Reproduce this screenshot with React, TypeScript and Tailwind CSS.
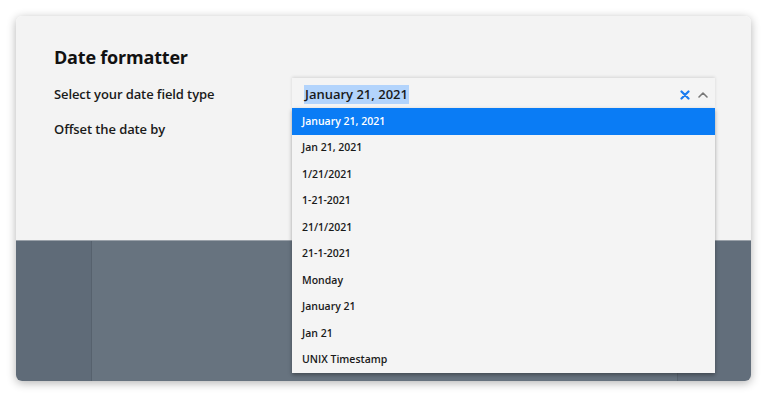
import React from "react";

const options = [
  "January 21, 2021",
  "Jan 21, 2021",
  "1/21/2021",
  "1-21-2021",
  "21/1/2021",
  "21-1-2021",
  "Monday",
  "January 21",
  "Jan 21",
  "UNIX Timestamp",
];

export default function App() {
  return (
    <div
      className="w-[767px] h-[397px] bg-white p-4"
      style={{ fontFamily: '"Open Sans", "Noto Sans", sans-serif' }}
    >
      <div className="relative flex flex-col w-[735px] h-[365px] rounded-[6px] overflow-hidden shadow-[0_2px_10px_rgba(0,0,0,0.3)]">
        {/* Top panel */}
        <div className="h-[225px] bg-[#f3f3f3] pl-[38px] pr-[36px] pt-[28px] border-b border-[#9aa1a9]">
          <h1 className="text-[18px] leading-[26px] font-bold tracking-[-0.2px] text-[#111]">
            Date formatter
          </h1>
          <div className="mt-[8px] grid grid-cols-[238px_1fr] gap-y-[11px]">
            <div className="h-[30px] pt-[3px] flex items-center text-[13px] font-semibold tracking-[-0.1px] text-[#1a1a1a]">
              Select your date field type
            </div>
            <div className="relative">
              <div className="h-[30px] pt-[3px] flex items-center pl-3 pr-[6px] bg-[#f4f4f4] shadow-[0_-1px_3px_rgba(0,0,0,0.12)]">
                <span className="bg-[#b3d4fc] text-[13px] leading-[19px] font-semibold text-[#1a1a1a] px-px">
                  January 21, 2021
                </span>
                <div className="ml-auto flex items-center gap-[7px]">
                  <svg width="10" height="10" viewBox="0 0 10 10">
                    <path d="M1.5 1.5L8.5 8.5M8.5 1.5L1.5 8.5" stroke="#1a7cf0" strokeWidth="2.2" strokeLinecap="round" />
                  </svg>
                  <svg width="12" height="10" viewBox="0 0 12 10">
                    <path d="M2 7L6 3L10 7" stroke="#777" strokeWidth="1.6" fill="none" strokeLinecap="round" strokeLinejoin="round" />
                  </svg>
                </div>
              </div>
              {/* Open menu */}
              <div className="absolute left-0 right-0 top-[30px] z-10 bg-[#f4f4f4] shadow-[0_2px_4px_rgba(0,0,0,0.35)]">
                {options.map((o, i) => (
                  <div
                    key={o}
                    className={`h-[26.5px] pt-px flex items-center pl-[10px] text-[10.5px] font-semibold ${
                      i === 0 ? "bg-[#0a7cf5] text-white" : "text-[#1a1a1a]"
                    }`}
                  >
                    {o}
                  </div>
                ))}
              </div>
            </div>
            <div className="h-[22px] flex items-center text-[13px] font-semibold tracking-[-0.1px] text-[#1a1a1a]">
              Offset the date by
            </div>
            <div />
          </div>
        </div>
        {/* Backdrop area */}
        <div className="flex-1 flex shadow-[inset_0_6px_6px_-4px_rgba(0,0,0,0.25)]">
          <div className="w-[76px] bg-[#5f6b78] border-r border-[#56616d]" />
          <div className="flex-1 bg-[#67737f]" />
          <div className="w-[74px] bg-[#626e7b] border-l border-[#59646f]" />
        </div>
      </div>
    </div>
  );
}
